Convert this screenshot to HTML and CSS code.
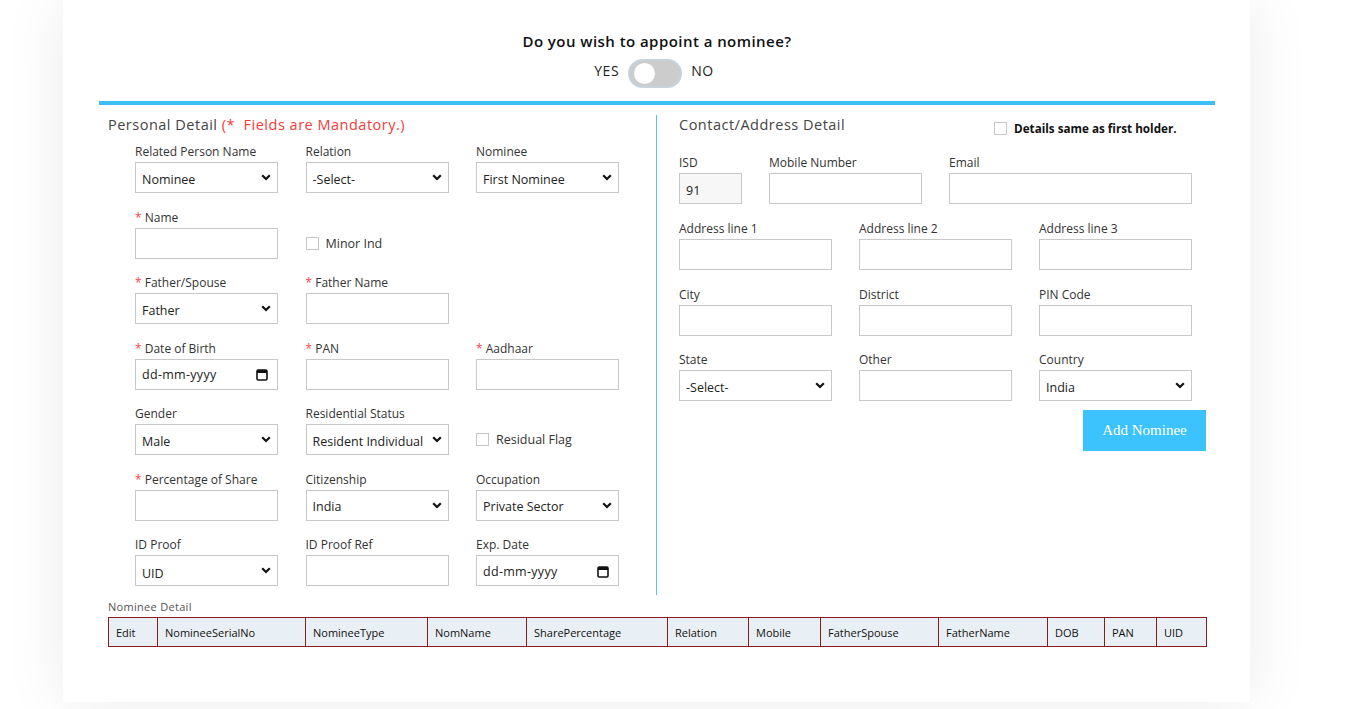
FILE: index.html
```html
<!DOCTYPE html>
<html lang="en">
<head>
<meta charset="utf-8">
<title>Nominee</title>
<link rel="stylesheet" href="styles.css">
</head>
<body>
<div class="page">
  <div class="card">
    <div class="question">
      <h2 class="q-title">Do you wish to appoint a nominee?</h2>
      <div class="toggle-row">
        <span class="toggle-txt">YES</span>
        <span class="switch"><span class="knob"></span></span>
        <span class="toggle-txt">NO</span>
      </div>
    </div>
    <div class="rule"></div>

    <div class="cols">
      <section class="personal">
        <h3 class="sec-title">Personal Detail <span class="mand">(*&nbsp; Fields are Mandatory.)</span></h3>
        <div class="pgrid">
          <div class="field">
            <label>Related Person Name</label>
            <div class="sel"><select><option>Nominee</option></select><svg class="chev" width="10" height="7" viewBox="0 0 10 7"><path d="M1.2 1.2 L5 5 L8.8 1.2" fill="none" stroke="#111" stroke-width="2.2"/></svg></div>
          </div>
          <div class="field">
            <label>Relation</label>
            <div class="sel"><select><option>-Select-</option></select><svg class="chev" width="10" height="7" viewBox="0 0 10 7"><path d="M1.2 1.2 L5 5 L8.8 1.2" fill="none" stroke="#111" stroke-width="2.2"/></svg></div>
          </div>
          <div class="field">
            <label>Nominee</label>
            <div class="sel"><select><option>First Nominee</option></select><svg class="chev" width="10" height="7" viewBox="0 0 10 7"><path d="M1.2 1.2 L5 5 L8.8 1.2" fill="none" stroke="#111" stroke-width="2.2"/></svg></div>
          </div>

          <div class="field">
            <label><span class="req">*</span> Name</label>
            <input class="inp" type="text">
          </div>
          <div class="field">
            <label>&nbsp;</label>
            <div class="chk-line"><input type="checkbox" class="cbx"><span>Minor Ind</span></div>
          </div>
          <div class="field"></div>

          <div class="field">
            <label><span class="req">*</span> Father/Spouse</label>
            <div class="sel"><select><option>Father</option></select><svg class="chev" width="10" height="7" viewBox="0 0 10 7"><path d="M1.2 1.2 L5 5 L8.8 1.2" fill="none" stroke="#111" stroke-width="2.2"/></svg></div>
          </div>
          <div class="field">
            <label><span class="req">*</span> Father Name</label>
            <input class="inp" type="text">
          </div>
          <div class="field"></div>

          <div class="field">
            <label><span class="req">*</span> Date of Birth</label>
            <div class="date"><span>dd-mm-yyyy</span><svg width="12" height="13" viewBox="0 0 12 13"><rect x="1" y="2" width="10" height="10" rx="1.2" fill="none" stroke="#111" stroke-width="1.6"/><rect x="1" y="2" width="10" height="3" fill="#111"/></svg></div>
          </div>
          <div class="field">
            <label><span class="req">*</span> PAN</label>
            <input class="inp" type="text">
          </div>
          <div class="field">
            <label><span class="req">*</span> Aadhaar</label>
            <input class="inp" type="text">
          </div>

          <div class="field">
            <label>Gender</label>
            <div class="sel"><select><option>Male</option></select><svg class="chev" width="10" height="7" viewBox="0 0 10 7"><path d="M1.2 1.2 L5 5 L8.8 1.2" fill="none" stroke="#111" stroke-width="2.2"/></svg></div>
          </div>
          <div class="field">
            <label>Residential Status</label>
            <div class="sel"><select><option>Resident Individual</option></select><svg class="chev" width="10" height="7" viewBox="0 0 10 7"><path d="M1.2 1.2 L5 5 L8.8 1.2" fill="none" stroke="#111" stroke-width="2.2"/></svg></div>
          </div>
          <div class="field">
            <label>&nbsp;</label>
            <div class="chk-line"><input type="checkbox" class="cbx"><span>Residual Flag</span></div>
          </div>

          <div class="field">
            <label><span class="req">*</span> Percentage of Share</label>
            <input class="inp" type="text">
          </div>
          <div class="field">
            <label>Citizenship</label>
            <div class="sel"><select><option>India</option></select><svg class="chev" width="10" height="7" viewBox="0 0 10 7"><path d="M1.2 1.2 L5 5 L8.8 1.2" fill="none" stroke="#111" stroke-width="2.2"/></svg></div>
          </div>
          <div class="field">
            <label>Occupation</label>
            <div class="sel"><select><option>Private Sector</option></select><svg class="chev" width="10" height="7" viewBox="0 0 10 7"><path d="M1.2 1.2 L5 5 L8.8 1.2" fill="none" stroke="#111" stroke-width="2.2"/></svg></div>
          </div>

          <div class="field">
            <label>ID Proof</label>
            <div class="sel"><select class="low"><option>UID</option></select><svg class="chev" width="10" height="7" viewBox="0 0 10 7"><path d="M1.2 1.2 L5 5 L8.8 1.2" fill="none" stroke="#111" stroke-width="2.2"/></svg></div>
          </div>
          <div class="field">
            <label>ID Proof Ref</label>
            <input class="inp" type="text">
          </div>
          <div class="field">
            <label>Exp. Date</label>
            <div class="date"><span>dd-mm-yyyy</span><svg width="12" height="13" viewBox="0 0 12 13"><rect x="1" y="2" width="10" height="10" rx="1.2" fill="none" stroke="#111" stroke-width="1.6"/><rect x="1" y="2" width="10" height="3" fill="#111"/></svg></div>
          </div>
        </div>
      </section>

      <section class="contact">
        <div class="contact-head">
          <h3 class="sec-title">Contact/Address Detail</h3>
          <div class="same-holder"><input type="checkbox" class="cbx"><span>Details same as first holder.</span></div>
        </div>
        <div class="crow first">
          <div class="field isd">
            <label>ISD</label>
            <input class="inp ro" type="text" value="91" readonly>
          </div>
          <div class="field mid">
            <label>Mobile Number</label>
            <input class="inp" type="text">
          </div>
          <div class="field email">
            <label>Email</label>
            <input class="inp" type="text">
          </div>
        </div>
        <div class="cgrid">
          <div class="field"><label>Address line 1</label><input class="inp" type="text"></div>
          <div class="field"><label>Address line 2</label><input class="inp" type="text"></div>
          <div class="field"><label>Address line 3</label><input class="inp" type="text"></div>

          <div class="field"><label>City</label><input class="inp" type="text"></div>
          <div class="field"><label>District</label><input class="inp" type="text"></div>
          <div class="field"><label>PIN Code</label><input class="inp" type="text"></div>

          <div class="field">
            <label>State</label>
            <div class="sel"><select><option>-Select-</option></select><svg class="chev" width="10" height="7" viewBox="0 0 10 7"><path d="M1.2 1.2 L5 5 L8.8 1.2" fill="none" stroke="#111" stroke-width="2.2"/></svg></div>
          </div>
          <div class="field"><label>Other</label><input class="inp" type="text"></div>
          <div class="field">
            <label>Country</label>
            <div class="sel"><select><option>India</option></select><svg class="chev" width="10" height="7" viewBox="0 0 10 7"><path d="M1.2 1.2 L5 5 L8.8 1.2" fill="none" stroke="#111" stroke-width="2.2"/></svg></div>
          </div>
        </div>
        <div class="btn-row"><button class="add-btn" type="button">Add Nominee</button></div>
      </section>
    </div>

    <div class="nom-detail">
      <div class="nd-title">Nominee Detail</div>
      <table class="nd-table">
        <colgroup>
          <col style="width:49px"><col style="width:148px"><col style="width:122px"><col style="width:99px"><col style="width:141px"><col style="width:81px"><col style="width:72px"><col style="width:118px"><col style="width:109px"><col style="width:57px"><col style="width:52px"><col style="width:50px">
        </colgroup>
        <thead>
          <tr>
            <th>Edit</th><th>NomineeSerialNo</th><th>NomineeType</th><th>NomName</th><th>SharePercentage</th><th>Relation</th><th>Mobile</th><th>FatherSpouse</th><th>FatherName</th><th>DOB</th><th>PAN</th><th>UID</th>
          </tr>
        </thead>
      </table>
    </div>
  </div>
</div>
</body>
</html>
```

FILE: styles.css
```css
* { box-sizing: border-box; }
html, body { margin: 0; padding: 0; }
body {
  background: #f7f7f7;
  font-family: "Open Sans", "Noto Sans", sans-serif;
  color: #222;
  overflow: hidden;
}
.page {
  height: 709px;
  background: #fff;
}
.card {
  margin-left: 63px;
  width: 1187px;
  height: 702px;
  background: #fff;
  box-shadow: 0 0 60px rgba(0, 0, 0, 0.08);
  padding: 31px 35px 0 36px;
}
.question {
  display: flex;
  flex-direction: column;
  align-items: center;
}
.q-title {
  margin: 0;
  font-family: "Open Sans", sans-serif;
  font-weight: 600;
  font-size: 15px;
  line-height: 20px;
  letter-spacing: 0.45px;
  color: #111;
}
.toggle-row {
  margin-top: 8px;
  display: flex;
  align-items: center;
  gap: 9px;
  height: 29px;
  padding-right: 6px;
}
.toggle-txt {
  font-size: 14px;
  line-height: 18px;
  color: #222;
  letter-spacing: 0.6px;
  margin-top: -5px;
}
.switch {
  position: relative;
  width: 54px;
  height: 29px;
  border-radius: 15px;
  background: #cccccc;
  border: 2px solid #c6d3df;
}
.knob {
  position: absolute;
  left: 4px;
  top: 2px;
  width: 21px;
  height: 21px;
  border-radius: 50%;
  background: #fff;
}
.rule {
  margin-top: 13px;
  height: 4px;
  background: #3dbff5;
}
.cols {
  display: flex;
  margin-top: 10px;
}
.personal {
  width: 558px;
  border-right: 1px solid #52c4f4;
  padding-bottom: 9px;
}
.sec-title {
  margin: 0;
  font-weight: 400;
  font-size: 14.5px;
  line-height: 20px;
  letter-spacing: 0.5px;
  color: #444;
}
.personal .sec-title {
  padding-left: 9px;
  margin-bottom: 9px;
}
.mand { color: #f33b3b; }
.pgrid {
  display: grid;
  grid-template-columns: repeat(3, 143px);
  column-gap: 27.5px;
  row-gap: 16.5px;
  padding-left: 36px;
}
.field {
  display: flex;
  flex-direction: column;
}
.field label {
  font-size: 12px;
  line-height: 16px;
  height: 16px;
  margin-bottom: 2px;
  color: #333;
  white-space: nowrap;
}
.req { color: #f44; }
.inp, .sel select, .date {
  height: 31px;
  width: 100%;
  border: 1px solid #c8c8c8;
  background: #fff;
  font-family: inherit;
  font-size: 12.5px;
  color: #222;
  padding: 0 6px;
  margin: 0;
  border-radius: 0;
  outline: none;
}
.inp.ro {
  background: #f7f7f7;
  padding-top: 3px;
}
.sel {
  position: relative;
}
.sel select {
  appearance: none;
  -webkit-appearance: none;
  padding-top: 3px;
}
.sel select.low { padding-top: 5px; }
.chev {
  position: absolute;
  right: 7px;
  top: 12px;
  pointer-events: none;
}
.date {
  display: flex;
  align-items: center;
  justify-content: space-between;
  padding: 1px 9px 0 6px;
  letter-spacing: 0.3px;
}
.chk-line {
  height: 31px;
  display: flex;
  align-items: center;
  gap: 7px;
  font-size: 12.5px;
  color: #333;
}
.cbx {
  appearance: none;
  -webkit-appearance: none;
  width: 13px;
  height: 13px;
  margin: 0;
  border: 1px solid #c8c8c8;
  background: #fff;
  flex: none;
}
.contact {
  flex: 1;
  padding-left: 22px;
  padding-right: 9px;
}
.contact-head {
  display: flex;
  align-items: flex-start;
  margin-bottom: 19px;
}
.same-holder {
  margin-left: auto;
  width: 212px;
  display: flex;
  align-items: center;
  gap: 7px;
  padding-top: 5px;
  font-size: 11.7px;
  font-weight: 700;
  color: #111;
}
.crow {
  display: flex;
  gap: 27px;
}
.crow .isd { width: 63px; }
.crow .mid { width: 153px; }
.crow .email { width: 243px; }
.cgrid {
  margin-top: 17px;
  display: grid;
  grid-template-columns: repeat(3, 153px);
  column-gap: 27px;
  row-gap: 16.5px;
}
.btn-row {
  display: flex;
  justify-content: flex-end;
  margin-top: 9px;
}
.add-btn {
  width: 123px;
  height: 41px;
  border: none;
  background: #3cc2fd;
  color: #fff;
  font-family: "Liberation Serif", serif;
  font-size: 15px;
  padding: 0;
}
.nom-detail {
  padding: 5px 9px 0 9px;
}
.nd-title {
  font-size: 11px;
  line-height: 14px;
  color: #555;
  letter-spacing: 0.3px;
  margin-bottom: 3px;
}
.nd-table {
  width: 1098px;
  table-layout: fixed;
  border-collapse: collapse;
}
.nd-table th {
  height: 29px;
  border: 1px solid #8b1c1c;
  background: #e9f0f5;
  font-weight: 400;
  font-size: 11px;
  text-align: left;
  padding: 0 0 0 7px;
  color: #111;
  white-space: nowrap;
}
```
